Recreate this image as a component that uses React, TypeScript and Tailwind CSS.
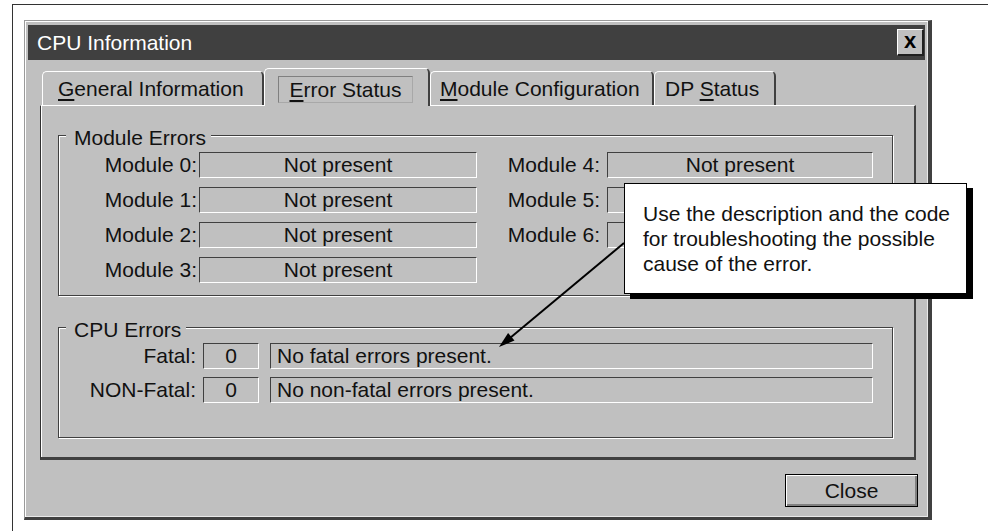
import React from "react";

function Group({
  title,
  className,
  children,
}: {
  title: string;
  className: string;
  children: React.ReactNode;
}) {
  return (
    <div
      className={
        "relative border border-[#404040] shadow-[inset_1px_1px_0_#fff,1px_1px_0_#fff] " +
        className
      }
    >
      <div className="absolute left-[7px] top-[-10px] pl-[8px] pr-[5px] bg-[#c0c0c0] leading-[24px]">
        {title}
      </div>
      {children}
    </div>
  );
}

function Field({
  className,
  children,
}: {
  className: string;
  children?: React.ReactNode;
}) {
  return (
    <div
      className={
        "h-[26px] flex items-center border-t border-l border-t-[#404040] border-l-[#404040] border-b border-r border-b-white border-r-white " +
        className
      }
    >
      {children}
    </div>
  );
}

function ModuleRow({
  left,
  right,
}: {
  left: string;
  right?: string;
}) {
  return (
    <div className="flex items-center h-[26px]">
      <div className="w-[138px] text-right">{left}</div>
      <Field className="ml-[2px] w-[278px] justify-center">Not present</Field>
      {right && (
        <>
          <div className="w-[123px] text-right">{right}</div>
          <Field className="ml-[7px] w-[266px] justify-center">Not present</Field>
        </>
      )}
    </div>
  );
}

function CpuRow({ label, text }: { label: string; text: string }) {
  return (
    <div className="flex items-center h-[26px]">
      <div className="w-[137px] text-right">{label}</div>
      <Field className="ml-[7px] w-[56px] justify-center">0</Field>
      <Field className="ml-[11px] w-[603px] pl-[6px]">{text}</Field>
    </div>
  );
}

export default function App() {
  return (
    <div className="relative w-[988px] h-[531px] bg-white pt-[4px] pl-[12px] overflow-hidden font-['Liberation_Sans',Arial,Helvetica,sans-serif] text-[21px] leading-[24px] text-[#111]">
      <div className="h-full border-t border-l border-[#333] pl-[11px] pt-[15px]">
        {/* Dialog */}
        <div className="w-[908px] h-[500px] bg-[#c0c0c0] flex flex-col border-t border-l border-t-[#9a9a9a] border-l-[#9a9a9a] border-r-[4px] border-b-[3px] border-r-[#404040] border-b-[#404040] shadow-[inset_1px_1px_0_#fff,inset_-1px_-1px_0_#e8e8e8] pl-[3px] pt-[4px] pr-[3px] pb-[10px]">
          {/* Title bar */}
          <div className="h-[35px] bg-[#404040] flex items-center justify-between pl-[9px] pr-[1px]">
            <span className="text-white">CPU Information</span>
            <div className="w-[27px] h-[27px] bg-[#c0c0c0] border-t border-l border-t-white border-l-white border-b-2 border-r-2 border-b-[#202020] border-r-[#202020] flex items-center justify-center">
              <span className="font-bold text-[22px] leading-none text-black -mt-[3px]">x</span>
            </div>
          </div>

          {/* Tabs */}
          <div className="mt-[8px] h-[37px] flex items-end pl-[14px]">
            <div className="w-[222px] h-[34px] flex items-center pl-[15px] border-t border-l border-t-white border-l-white border-r-2 border-r-[#404040] rounded-tl-[5px] rounded-tr-[5px]">
              <span>
                <u className="underline-offset-[3px]">G</u>eneral Information
              </span>
            </div>
            <div className="relative z-10 w-[166px] h-[38px] -mb-[1px] bg-[#c0c0c0] flex items-start pl-[13px] pt-[7px] border-t border-l border-t-white border-l-white border-r-2 border-r-[#404040] rounded-tl-[5px] rounded-tr-[5px]">
              <div className="w-[135px] h-[27px] flex items-center justify-center border border-t-[#808080] border-l-[#808080] border-b-[#a8a8a8] border-r-[#a8a8a8]">
                <span>
                  <u className="underline-offset-[3px]">E</u>rror Status
                </span>
              </div>
            </div>
            <div className="w-[224px] h-[34px] flex items-center pl-[9px] border-t border-l border-t-white border-l-white border-r-2 border-r-[#404040] rounded-tl-[5px] rounded-tr-[5px]">
              <span>
                <u className="underline-offset-[3px]">M</u>odule Configuration
              </span>
            </div>
            <div className="w-[122px] h-[34px] flex items-center pl-[10px] border-t border-l border-t-white border-l-white border-r-2 border-r-[#404040] rounded-tl-[5px] rounded-tr-[5px]">
              <span>
                DP <u className="underline-offset-[3px]">S</u>tatus
              </span>
            </div>
          </div>

          {/* Tab panel */}
          <div className="ml-[12px] w-[876px] h-[355px] border-t border-t-white border-l border-l-[#303030] border-r-2 border-r-[#404040] border-b-[3px] border-b-[#404040] shadow-[inset_1px_0_0_#fff] pl-[17px] pt-[29px]">
            <Group title="Module Errors" className="w-[835px] h-[161px] pt-[16px]">
              <div className="flex flex-col gap-[9px]">
                <ModuleRow left="Module 0:" right="Module 4:" />
                <ModuleRow left="Module 1:" right="Module 5:" />
                <ModuleRow left="Module 2:" right="Module 6:" />
                <ModuleRow left="Module 3:" />
              </div>
            </Group>
            <Group title="CPU Errors" className="mt-[31px] w-[835px] h-[111px] pt-[15px]">
              <div className="flex flex-col gap-[8px]">
                <CpuRow label="Fatal:" text="No fatal errors present." />
                <CpuRow label="NON-Fatal:" text="No non-fatal errors present." />
              </div>
            </Group>
          </div>

          {/* Close */}
          <div className="mt-[14px] flex justify-end pr-[7px]">
            <div className="w-[133px] h-[33px] border border-black shadow-[inset_1px_1px_0_#fff,inset_-2px_-2px_0_#808080] flex items-center justify-center">
              Close
            </div>
          </div>
        </div>
      </div>

      {/* Arrow */}
      <svg
        className="absolute left-0 top-0 pointer-events-none"
        width="988"
        height="531"
        viewBox="0 0 988 531"
      >
        <line x1="624" y1="243" x2="510" y2="338" stroke="#000" strokeWidth="2" />
        <polygon points="499,347 514.5,340.6 508.1,332.9" fill="#000" />
      </svg>

      {/* Callout */}
      <div className="absolute left-[624px] top-[183px] w-[343px] h-[111px] bg-white border border-black shadow-[6px_5px_0_0_#000] pl-[18px] pt-[17px] leading-[25px] text-[#111]">
        Use the description and the code
        <br />
        for troubleshooting the possible
        <br />
        cause of the error.
      </div>
    </div>
  );
}
